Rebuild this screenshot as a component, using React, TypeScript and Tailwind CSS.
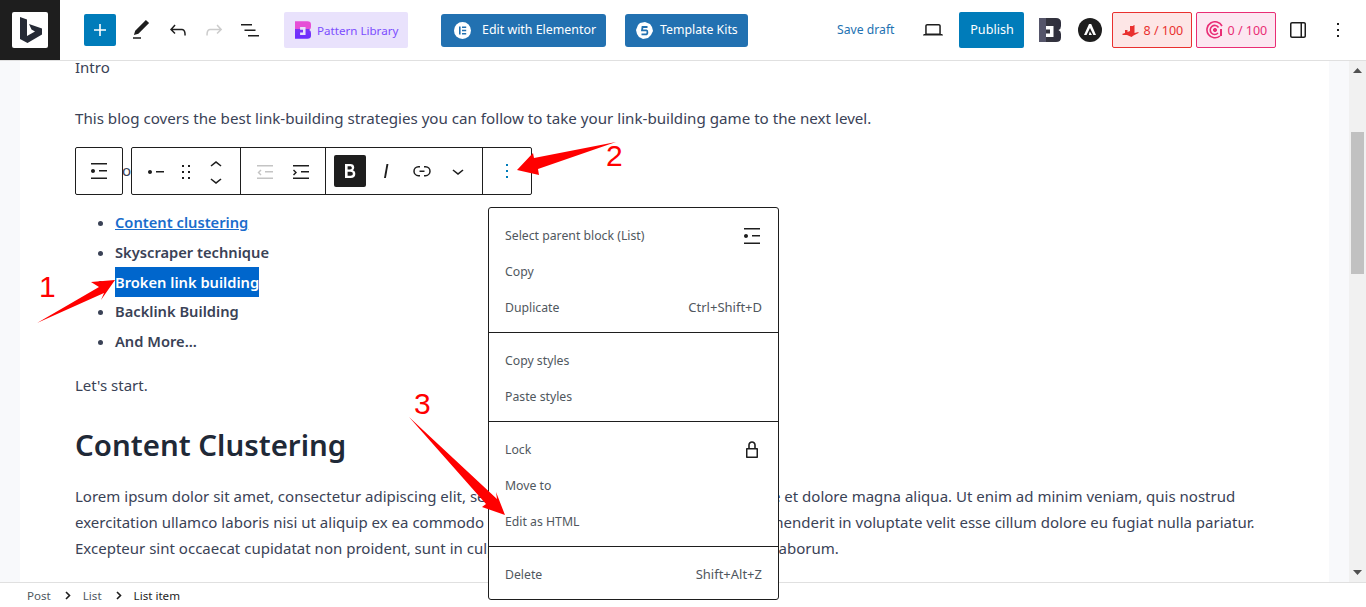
import React from "react";

const P = ({ d, size = 24, className = "" }: { d: string; size?: number; className?: string }) => (
  <svg width={size} height={size} viewBox="0 0 24 24" fill="currentColor" className={className}>
    <path d={d} />
  </svg>
);

const I = {
  plus: "M18 11.2h-5.2V6h-1.6v5.2H6v1.6h5.2V18h1.6v-5.2H18z",
  edit: "M20.1 5.1L16.9 2 6.2 12.7l-1.3 4.4 4.5-1.3L20.1 5.1zM4 20.8h8v-1.5H4v1.5z",
  undo: "M18.3 11.7c-.6-.6-1.4-.9-2.3-.9H6.7l2.9-3.3-1.1-1-4.5 5L8.5 16l1-1-2.7-2.7H16c.5 0 .9.2 1.3.5 1 1 1 3.4 1 4.5v.3h1.5v-.2c0-1.5 0-4.3-1.5-5.7z",
  redo: "M15.6 6.5l-1.1 1 2.9 3.3H8c-.9 0-1.7.3-2.3.9-1.4 1.5-1.4 4.2-1.4 5.6v.2h1.5v-.3c0-1.1 0-3.5 1-4.5.3-.3.7-.5 1.3-.5h9.2L14.5 15l1.1 1.1 4.6-4.6-4.6-5z",
  listView: "M3 6h11v1.5H3V6Zm3.5 5.5h11V13h-11v-1.5ZM21 17H10v1.5h11V17Z",
  list: "M4 4v1.5h16V4H4zm8 8.5h8V11h-8v1.5zM4 20h16v-1.5H4V20zm4-8c0-1.1-.9-2-2-2s-2 .9-2 2 .9 2 2 2 2-.9 2-2z",
  item: "M12 11v1.5h8V11h-8zm-6-1c-1.1 0-2 .9-2 2s.9 2 2 2 2-.9 2-2-.9-2-2-2z",
  drag: "M8 7h2V5H8v2zm0 6h2v-2H8v2zm0 6h2v-2H8v2zm6-14v2h2V5h-2zm0 8h2v-2h-2v2zm0 6h2v-2h-2v2z",
  up: "M6.5 12.4L12 8l5.5 4.4-.9 1.2L12 10l-4.5 3.6-1-1.2z",
  down: "M17.5 11.6L12 16l-5.5-4.4.9-1.2L12 14l4.5-3.6 1 1.2z",
  outdent: "M20 6.5H4V5h16v1.5zM12 12.5h8V11h-8v1.5zM20 19v-1.5H4V19h16zM7.5 9.5l1 1-2 2 2 2-1 1-3-3 3-3z",
  indent: "M20 6.5H4V5h16v1.5zM12 12.5h8V11h-8v1.5zM20 19v-1.5H4V19h16zM5 15.5l-1-1 2-2-2-2 1-1 3 3-3 3z",
  bold: "M14.7 11.3c1-.6 1.5-1.6 1.5-3 0-2.3-1.3-3.4-4-3.4H7v14h5.8c1.4 0 2.5-.3 3.3-1 .8-.7 1.2-1.7 1.2-2.9.1-1.9-.8-3.1-2.6-3.7zm-5.1-4h2.3c.6 0 1.1.1 1.4.4.3.3.5.7.5 1.2s-.2 1-.5 1.2c-.3.3-.8.4-1.4.4H9.6V7.3zm4.6 9c-.4.3-1 .4-1.7.4H9.6v-3.9h2.9c.7 0 1.3.2 1.7.5.4.3.6.8.6 1.5s-.2 1.2-.6 1.5z",
  italic: "M12.5 5L10 19h1.9l2.5-14z",
  link: "M10 17.389H8.444A5.194 5.194 0 1 1 8.444 7H10v1.5H8.444a3.694 3.694 0 0 0 0 7.389H10v1.5ZM14 7h1.556a5.194 5.194 0 0 1 0 10.39H14v-1.5h1.556a3.694 3.694 0 0 0 0-7.39H14V7Zm-4.5 6h5v-1.5h-5V13Z",
  more: "M13 19h-2v-2h2v2zm0-6h-2v-2h2v2zm0-6h-2V5h2v2z",
  laptop: "M20.5 16h-.7V8c0-1.1-.9-2-2-2H6.2c-1.1 0-2 .9-2 2v8h-.7c-.8 0-1.5.7-1.5 1.5h20c0-.8-.7-1.5-1.5-1.5zM5.7 8c0-.3.2-.5.5-.5h11.6c.3 0 .5.2.5.5v7.6H5.7V8z",
  drawer: "M18 4H6c-1.1 0-2 .9-2 2v12c0 1.1.9 2 2 2h12c1.1 0 2-.9 2-2V6c0-1.1-.9-2-2-2zM5.5 18V6c0-.3.2-.5.5-.5h8.5v13H6c-.3 0-.5-.2-.5-.5zm13 0c0 .3-.2.5-.5.5h-2v-13h2c.3 0 .5.2.5.5v12z",
  lock: "M17 10h-1.2V7c0-2.1-1.7-3.8-3.8-3.8-2.1 0-3.8 1.7-3.8 3.8v3H7c-.6 0-1 .4-1 1v8c0 .6.4 1 1 1h10c.6 0 1-.4 1-1v-8c0-.6-.4-1-1-1zM9.8 7c0-1.2 1-2.2 2.2-2.2 1.2 0 2.2 1 2.2 2.2v3H9.8V7zm6.7 11.5h-9v-7h9v7z",
};

const BlockB = ({ id, c1, c2, c3, w, h, across, split }: { id: string; c1: string; c2: string; c3: string; w: number; h: number; across: boolean; split: number }) => (
  <svg width={w} height={h} viewBox="0 0 22 24">
    <defs>
      <linearGradient id={id} x1="0" y1="0" x2={across ? 1 : 0} y2={across ? 0 : 1}>
        <stop offset="0" stopColor={c1} />
        <stop offset={split} stopColor={c1} />
        <stop offset={split} stopColor={c2} />
        <stop offset="1" stopColor={c3} />
      </linearGradient>
    </defs>
    <path
      fill={`url(#${id})`}
      fillRule="evenodd"
      d="M0 0H17Q22 0 22 4.5V8Q22 11 19.5 12Q22 13 22 16V19.5Q22 24 17 24H0ZM7 8H14.5V19H7V15.5H11V11.5H7Z"
    />
  </svg>
);

function Header() {
  return (
    <header className="h-[61px] shrink-0 flex items-center border-b border-[#e0e0e0] bg-white">
      <div className="w-[60px] h-[60px] bg-[#1e1e1e] flex items-center justify-center shrink-0">
        <div className="w-9 h-9 bg-white rounded-[2px] flex items-center justify-center">
          <svg width="36" height="36" viewBox="12 12 36 36">
            <path fill="#252a35" d="M20 17L27 19.5V36L35 31.5L31.5 29.5L29 24L42 28.5V34.5L27.5 43L20 39Z" />
          </svg>
        </div>
      </div>
      <div className="ml-6 w-8 h-8 bg-[#007cba] rounded-[2px] text-white flex items-center justify-center">
        <P d={I.plus} />
      </div>
      <P d={I.edit} className="ml-[13px] text-[#1e1e1e]" />
      <P d={I.undo} className="ml-[13px] text-[#1e1e1e]" />
      <P d={I.redo} className="ml-3 text-[#cccccc]" />
      <P d={I.listView} className="ml-3 text-[#1e1e1e]" />
      <div className="ml-[22px] w-[124px] h-9 bg-[#e9e2fc] rounded-[2px] flex items-center pl-[11px] gap-[6px] text-[#7c4dff] text-[11.6px]">
        <BlockB id="pl" c1="#e64fd6" c2="#7a35f5" c3="#6a2cff" w={16} h={18} across={false} split={0.45} />
        <span className="mt-[1px]">Pattern Library</span>
      </div>
      <div className="ml-[33px] w-[165px] h-[33px] bg-[#2271b1] rounded-[3px] flex items-center pl-[13px] gap-[11px] text-white text-[12.4px]">
        <svg width="17" height="17" viewBox="0 0 17 17">
          <circle cx="8.5" cy="8.5" r="8.5" fill="#fff" />
          <path fill="#2271b1" d="M5 4.5h1.6v8H5zM8 4.5h4.2v1.6H8zM8 7.7h4.2v1.6H8zM8 10.9h4.2v1.6H8z" />
        </svg>
        <span className="mt-[1px]">Edit with Elementor</span>
      </div>
      <div className="ml-[19px] w-[123px] h-[33px] bg-[#2271b1] rounded-[3px] flex items-center pl-[11px] gap-[7px] text-white text-[12.3px]">
        <svg width="17" height="17" viewBox="0 0 17 17">
          <path fill="#fff" d="M4 1L9 0L14 2L16 5L17 9L15 13L12 16L7 17L3 15L1 12L0 8L2 3Z" />
          <path fill="none" stroke="#2271b1" strokeWidth="1.8" d="M11.5 5H6.5L6 8.4H10.5Q11.6 8.6 11.4 10.6T9.5 12.4H5.5" />
        </svg>
        <span>Template Kits</span>
      </div>
      <span className="ml-[89px] mt-[1px] text-[12.2px] text-[#2271b1]">Save draft</span>
      <P d={I.laptop} className="ml-[27px] text-[#1e1e1e]" />
      <div className="ml-[14px] w-[65px] h-9 pt-[1px] bg-[#007cba] rounded-[2px] text-white text-[12.6px] flex items-center justify-center">
        Publish
      </div>
      <div className="ml-[15px] flex">
        <BlockB id="bb" c1="#55556a" c2="#35353f" c3="#2f2f3d" w={22} h={24} across={true} split={0.33} />
      </div>
      <svg width="24" height="24" viewBox="0 0 24 24" className="ml-[17px]">
        <circle cx="12" cy="12" r="12" fill="#1e1e1e" />
        <path fill="#fff" d="M11 6h2.2L18 17h-2.6L12 10 8.5 17H6zM11.8 13.5l2.2 3.5h-3.2z" />
      </svg>
      <div className="ml-[10px] w-20 h-9 bg-[#fde6e6] border border-[#e9302f] rounded-[2px] flex items-center pl-[9px] gap-1 text-[#e9302f] text-[12.5px]">
        <svg width="17" height="14" viewBox="0 0 17 14">
          <path fill="#e9302f" d="M0 11l3-1V7h2.5v2L8 8V3h3.5V2h1v8l4-1v1l-5 2.5-2 1.5L5 12H1z" />
        </svg>
        <span className="mt-[2px]">8 / 100</span>
      </div>
      <div className="ml-1 w-20 h-9 bg-[#fce7f1] border border-[#e92d75] rounded-[2px] flex items-center pl-[9px] gap-[3px] text-[#e92d75] text-[12.5px]">
        <svg width="18" height="18" viewBox="0 0 18 18" fill="none" stroke="#e92d75">
          <path strokeWidth="1.6" d="M16 5A8 8 0 1 0 14 15" />
          <path strokeWidth="1.6" d="M12.5 6.5A4.5 4.5 0 1 0 12 12" />
          <circle cx="9" cy="9" r="1.6" fill="#e92d75" />
          <path strokeWidth="2" d="M15 8v7" />
        </svg>
        <span className="mt-[2px]">0 / 100</span>
      </div>
      <P d={I.drawer} className="ml-[10px] text-[#1e1e1e]" />
      <P d={I.more} className="ml-4 text-[#1e1e1e]" />
    </header>
  );
}

const li = "h-[30px] leading-[30px] font-semibold";
const liShort = "h-[29.5px] leading-[30px] font-semibold";

function Content() {
  return (
    <main className="flex-1 min-h-0 flex bg-white overflow-hidden">
      <div className="w-5 bg-[#f8f9fb] shrink-0" />
      <div className="flex-1 min-w-0 overflow-hidden pl-[55px] pr-[60px] text-[#3a4256] text-[15.02px] leading-[25.6px]">
        <p className="-mt-[6px]">Intro</p>
        <p className="mt-[25px] text-[15.15px]">This blog covers the best link-building strategies you can follow to take your link-building game to the next level.</p>
        <p className="mt-[27px] pl-[47px]">o</p>
        <ul className="mt-[23px] list-disc pl-10 text-[14.7px]">
          <li className={li}>
            <a className="text-[#1a6dcc] underline">Content clustering</a>
          </li>
          <li className={li}>Skyscraper technique</li>
          <li className={liShort}>
            <span className="bg-[#0066cc] text-white inline-block h-[30px]">Broken link building</span>
          </li>
          <li className={liShort}>Backlink Building</li>
          <li className={li}>And More...</li>
        </ul>
        <p className="mt-[17px]">Let's start.</p>
        <h2 className="mt-[25px] text-[29.45px] leading-[44px] font-semibold text-[#1f2937]">Content Clustering</h2>
        <p className="mt-[17px]">
          Lorem ipsum dolor sit amet, consectetur adipiscing elit, sed do eiusmod tempor incididunt ut labore et dolore magna aliqua. Ut enim ad minim veniam, quis nostrud exercitation ullamco laboris nisi ut aliquip ex ea commodo consequat. Duis aute irure dolor in reprehenderit in voluptate velit esse cillum dolore eu fugiat nulla pariatur. Excepteur sint occaecat cupidatat non proident, sunt in culpa qui officia deserunt mollit anim id est laborum.
        </p>
      </div>
      <div className="w-5 bg-[#f8f9fb] shrink-0" />
      <div className="w-[17px] bg-[#f1f1f1] shrink-0 flex flex-col items-center">
        <svg width="9" height="5" viewBox="0 0 9 5" className="mt-[7px] shrink-0"><path fill="#505050" d="M4.5 0L9 5H0z" /></svg>
        <div className="w-[13px] h-[142px] bg-[#c1c1c1] mt-[59px] shrink-0" />
        <svg width="9" height="5" viewBox="0 0 9 5" className="mt-auto mb-[7px] shrink-0"><path fill="#505050" d="M4.5 5L9 0H0z" /></svg>
      </div>
    </main>
  );
}

function Footer() {
  return (
    <footer className="h-[25px] shrink-0 border-t border-[#e0e0e0] bg-white flex items-center pl-[27px] pt-[1px] text-[11.6px] text-[#50575e]">
      <span>Post</span>
      <svg width="6" height="9" viewBox="0 0 6 9" className="ml-[14px]"><path fill="none" stroke="#1e1e1e" strokeWidth="1.6" d="M1 1l3.5 3.5L1 8" /></svg>
      <span className="ml-[12px]">List</span>
      <svg width="6" height="9" viewBox="0 0 6 9" className="ml-[14px]"><path fill="none" stroke="#1e1e1e" strokeWidth="1.6" d="M1 1l3.5 3.5L1 8" /></svg>
      <span className="ml-[12px] text-[#1e1e1e]">List item</span>
    </footer>
  );
}

const Btn = ({ d, className = "" }: { d: string; className?: string }) => (
  <div className={`w-9 h-12 flex items-center justify-center ${className}`}>
    <P d={d} />
  </div>
);

function Toolbar() {
  return (
    <div className="absolute left-[75px] top-[147px] flex gap-2 text-[#1e1e1e]">
      <div className="w-12 h-12 bg-white border border-[#1e1e1e] rounded-[2px] flex items-center justify-center">
        <P d={I.list} />
      </div>
      <div className="h-12 bg-white border border-[#1e1e1e] rounded-[2px] flex">
        <div className="flex pl-[6px] pr-[6px] border-r border-[#1e1e1e]">
          <Btn d={I.item} />
          <div className="w-6 h-12 flex items-center justify-center"><P d={I.drag} /></div>
          <div className="w-9 h-12 flex flex-col items-center justify-center">
            <div className="h-[14px] flex items-center"><P d={I.up} /></div>
            <div className="h-[14px] flex items-center mt-[1px]"><P d={I.down} /></div>
          </div>
        </div>
        <div className="flex px-[6px] border-r border-[#1e1e1e]">
          <Btn d={I.outdent} className="text-[#c4c4c4]" />
          <Btn d={I.indent} />
        </div>
        <div className="flex items-center pl-[8px] pr-[4px] border-r border-[#1e1e1e]">
          <div className="w-8 h-8 bg-[#1e1e1e] text-white rounded-[2px] flex items-center justify-center">
            <P d={I.bold} />
          </div>
          <div className="w-10 flex justify-center"><P d={I.italic} /></div>
          <div className="w-8 flex justify-center"><P d={I.link} /></div>
          <div className="w-10 flex justify-center"><P d={I.down} /></div>
        </div>
        <div className="w-[48px] flex items-center justify-center text-[#007cba]">
          <P d={I.more} />
        </div>
      </div>
    </div>
  );
}

const Item = ({ label, right }: { label: string; right?: React.ReactNode }) => (
  <div className="h-9 flex items-center justify-between px-4">
    <span>{label}</span>
    {right}
  </div>
);

const Short = ({ children }: { children: string }) => <span className="text-[13px]">{children}</span>;

function Menu() {
  return (
    <div className="absolute left-[488px] top-[207px] w-[291px] bg-white border border-[#1e1e1e] rounded-[3px] text-[12.25px] text-[#50575e]">
      <div className="pt-[10px] pb-[6px] border-b border-[#1e1e1e]">
        <Item label="Select parent block (List)" right={<P d={I.list} className="text-[#1e1e1e] -mr-[2px]" />} />
        <Item label="Copy" />
        <Item label="Duplicate" right={<Short>Ctrl+Shift+D</Short>} />
      </div>
      <div className="pt-[10px] pb-[6px] border-b border-[#1e1e1e]">
        <Item label="Copy styles" />
        <Item label="Paste styles" />
      </div>
      <div className="pt-[10px] pb-[6px] border-b border-[#1e1e1e]">
        <Item label="Lock" right={<P d={I.lock} className="text-[#1e1e1e] -mr-[2px]" />} />
        <Item label="Move to" />
        <Item label="Edit as HTML" />
      </div>
      <div className="pt-[10px] pb-[6px]">
        <Item label="Delete" right={<Short>Shift+Alt+Z</Short>} />
      </div>
    </div>
  );
}

function Annotations() {
  return (
    <>
      <svg width="1366" height="607" className="absolute left-0 top-0 pointer-events-none">
        <polygon fill="#ff0000" points="37,323 99,287 91,282 115,280 101,300 104,293" />
        <polygon fill="#ff0000" points="616,142 534,158 533,153 517,170 539,175 538,169" />
        <polygon fill="#ff0000" points="409,417 486,504 482,507 505,515 496,492 497,499" />
      </svg>
      <span className="absolute left-[39px] top-[269px] text-[30px] leading-[36px] text-[#ff0000] font-['Liberation_Sans']">1</span>
      <span className="absolute left-[606px] top-[138px] text-[30px] leading-[36px] text-[#ff0000] font-['Liberation_Sans']">2</span>
      <span className="absolute left-[414px] top-[386px] text-[30px] leading-[36px] text-[#ff0000] font-['Liberation_Sans']">3</span>
    </>
  );
}

export default function App() {
  return (
    <div className="relative w-[1366px] h-[607px] overflow-hidden flex flex-col bg-white font-['Noto_Sans',sans-serif]">
      <Header />
      <Content />
      <Footer />
      <Toolbar />
      <Menu />
      <Annotations />
    </div>
  );
}
